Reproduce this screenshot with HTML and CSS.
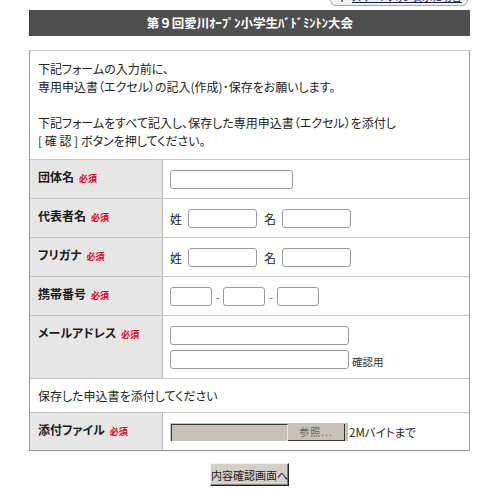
FILE: index.html
```html
<!DOCTYPE html>
<html lang="ja">
<head>
<meta charset="utf-8">
<title>第９回愛川ｵｰﾌﾟﾝ小学生ﾊﾞﾄﾞﾐﾝﾄﾝ大会</title>
<link rel="stylesheet" href="styles.css">
</head>
<body>
<div class="page">
  <div class="topbar">
    <div class="toptab"><span class="chk"></span><a class="toplink" href="#">スマートフォン表示に切替</a></div>
  </div>
  <h1 class="title">第９回愛川ｵｰﾌﾟﾝ小学生ﾊﾞﾄﾞﾐﾝﾄﾝ大会</h1>
  <form class="box">
    <div class="intro">
      <p>下記フォームの入力前に、<br>専用申込書（エクセル）の記入(作成)･保存をお願いします。</p>
      <p>下記フォームをすべて記入し、保存した専用申込書（エクセル）を添付し<br>[ 確 認 ] ボタンを押してください。</p>
    </div>
    <div class="row">
      <div class="lab">団体名<span class="req">必須</span></div>
      <div class="val"><input class="inp w-org" type="text"></div>
    </div>
    <div class="row">
      <div class="lab">代表者名<span class="req">必須</span></div>
      <div class="val"><span class="pre">姓</span><input class="inp w-name" type="text"><span class="pre">名</span><input class="inp w-name" type="text"></div>
    </div>
    <div class="row">
      <div class="lab">フリガナ<span class="req">必須</span></div>
      <div class="val"><span class="pre">姓</span><input class="inp w-name" type="text"><span class="pre">名</span><input class="inp w-name" type="text"></div>
    </div>
    <div class="row">
      <div class="lab">携帯番号<span class="req">必須</span></div>
      <div class="val tel"><input class="inp w-tel" type="text"><span class="dash">-</span><input class="inp w-tel" type="text"><span class="dash">-</span><input class="inp w-tel" type="text"></div>
    </div>
    <div class="row">
      <div class="lab">メールアドレス<span class="req">必須</span></div>
      <div class="val stack">
        <input class="inp w-mail" type="text">
        <div class="line"><input class="inp w-mail" type="text"><span class="small">確認用</span></div>
      </div>
    </div>
    <div class="note-row">保存した申込書を添付してください</div>
    <div class="row">
      <div class="lab">添付ファイル<span class="req">必須</span></div>
      <div class="val file-val"><div class="file"><span class="file-field"></span><span class="file-btn">参照...</span></div><span class="limit">2Mバイトまで</span></div>
    </div>
  </form>
  <div class="actions"><button class="submit" type="button">内容確認画面へ</button></div>
</div>
</body>
</html>
```
FILE: styles.css
```css
html {
  overflow: hidden;
}
body {
  margin: 0;
  background: #ffffff;
  color: #222222;
  font-family: "Noto Sans CJK JP", "Noto Sans", sans-serif;
  font-size: 12px;
  font-feature-settings: "palt";
}
.page {
  width: 441px;
  margin-left: 29px;
}
.topbar {
  display: flex;
  justify-content: flex-end;
  height: 6px;
  overflow: visible;
}
.toptab {
  display: flex;
  align-items: flex-end;
  gap: 9px;
  width: 138px;
  height: 16px;
  margin-top: -10px;
  margin-right: 2px;
  padding: 0 8px 3px 10px;
  box-sizing: border-box;
  background: #f0f0f0;
  border: 1px solid #a8a8a8;
  border-radius: 0 0 6px 6px;
}
.chk {
  width: 8px;
  height: 8px;
  border: 1px solid #777;
  background: #fff;
}
.toplink {
  color: #1a1a50;
  font-size: 10px;
  line-height: 10px;
  white-space: nowrap;
  text-decoration: underline;
}
.title {
  margin: 4px 0 0;
  height: 26px;
  background: #4f4f4f;
  border-left: 1px solid #333;
  color: #ffffff;
  font-size: 12.5px;
  font-weight: bold;
  line-height: 26px;
  text-align: center;
  font-feature-settings: normal;
}
.box {
  margin: 14px 0 0;
  border: 1px solid #999;
  border-top-color: #c4c4c4;
}
.intro {
  padding: 9px 8px 9px 8px;
  line-height: 18px;
}
.intro p {
  margin: 0;
}
.intro p + p {
  margin-top: 18px;
}
.row {
  display: grid;
  grid-template-columns: 132px 1fr;
  border-top: 1px solid #c4c4c4;
}
.lab {
  background: #e6e6e6;
  padding: 10px 8px;
  font-weight: bold;
  font-size: 12px;
  line-height: 13px;
  color: #1a1a1a;
}
.req {
  margin-left: 5px;
  color: #e0001a;
  font-size: 9px;
  font-weight: bold;
}
.val {
  border-left: 1px solid #b4b4b4;
  padding: 10px 7px 9px;
  display: flex;
  align-items: center;
}
.inp {
  box-sizing: border-box;
  height: 19px;
  margin: 0;
  padding: 0 3px;
  border: 1px solid #9a9a9a;
  border-radius: 3px;
  background: #fff;
  font: inherit;
}
.w-org { width: 123px; }
.w-name { width: 69px; }
.w-tel { width: 42px; }
.w-mail { width: 179px; }
.pre {
  margin-right: 6px;
  font-size: 12px;
  color: #222;
}
.inp + .pre { margin-left: 7px; }
.dash {
  margin: 0 4px;
  color: #555;
  font-size: 10px;
}
.stack {
  flex-direction: column;
  align-items: flex-start;
  gap: 5px;
}
.line {
  display: flex;
  align-items: center;
  gap: 3px;
}
.small {
  font-size: 10.5px;
  color: #333;
  padding-top: 3px;
}
.note-row {
  border-top: 1px solid #c4c4c4;
  padding: 10px 8px 9px;
  line-height: 14px;
}
.file {
  display: flex;
  box-sizing: border-box;
  width: 178px;
  height: 18px;
  background: #c6c2ba;
  padding: 1px 3px 0 1px;
}
.file-field {
  flex: 1;
  border-top: 1px solid #3a3a3a;
  border-left: 1px solid #3a3a3a;
  border-right: 1px solid #e8e6e0;
}
.file-btn {
  width: 57px;
  box-sizing: border-box;
  border-right: 1px solid #333;
  border-bottom: 1px solid #333;
  text-align: center;
  color: #666;
  font-size: 10px;
  line-height: 16px;
  letter-spacing: 1px;
}
.limit {
  margin-left: 1px;
  font-size: 11.5px;
}
.actions {
  display: flex;
  justify-content: center;
  margin-top: 12px;
}
.submit {
  width: 79px;
  height: 23px;
  padding: 0;
  background: #d4d0c8;
  border: 1px solid;
  border-color: #f4f4f4 #202020 #202020 #f4f4f4;
  box-shadow: inset -1px -1px 0 #808080;
  color: #222;
  font: inherit;
  font-size: 11px;
  font-feature-settings: normal;
}
```
